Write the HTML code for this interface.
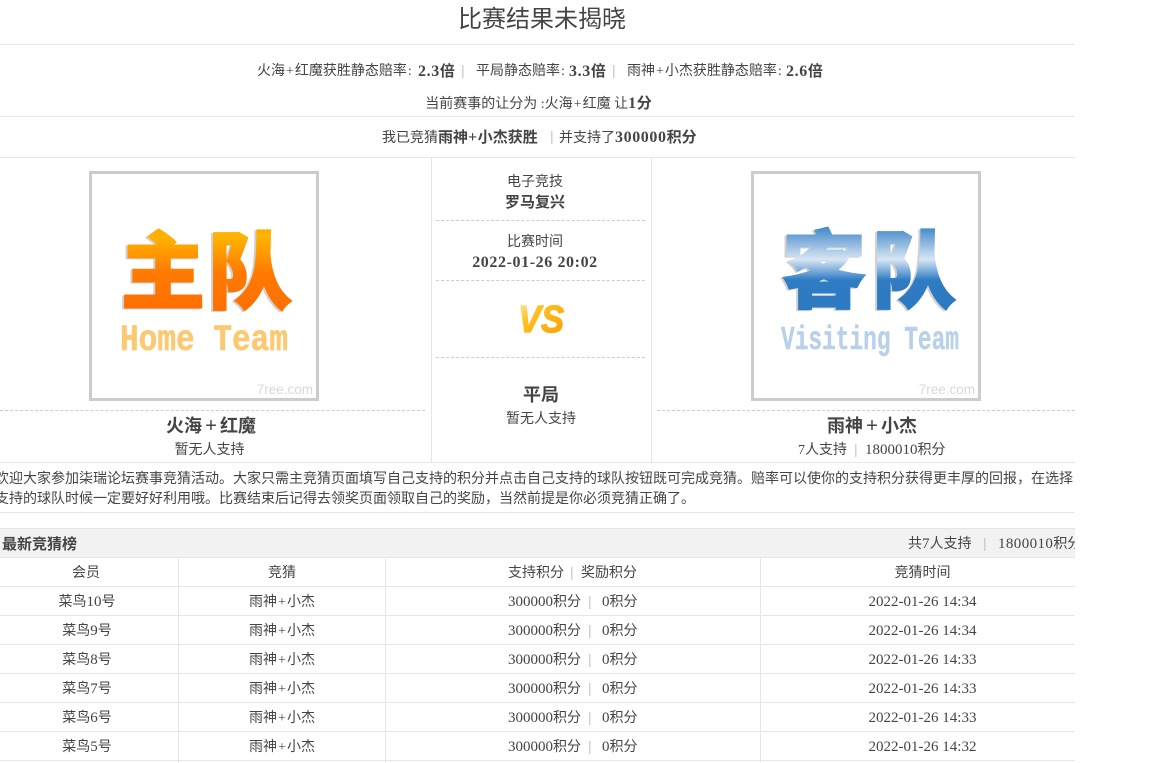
<!DOCTYPE html>
<html lang="zh"><head><meta charset="utf-8"><title>比赛结果未揭晓</title>
<style>
html,body{margin:0;padding:0;background:#fff}
body{width:1152px;height:763px;overflow:hidden;position:relative;font:14px/20px "Liberation Serif","Noto Sans CJK SC",sans-serif;color:#444}
#w{position:absolute;left:0;top:0;width:1075px;height:763px;overflow:hidden}
.h{position:absolute;left:0;width:1075px;height:1px;background:#e6e6e6}
.v{position:absolute;width:1px;background:#e6e6e6}
.d{position:absolute;height:0;border-top:1px dashed #ccc}
.c{position:absolute;text-align:center;white-space:nowrap;height:20px;line-height:20px}
.l{position:absolute;white-space:nowrap;height:20px;line-height:20px}
b{font-weight:bold;color:#444;font-size:15px}
b em{font:bold 16px/0 "Liberation Serif",serif;letter-spacing:.6px}
i{font-style:normal;color:#c4c4c4;font-family:"Liberation Sans",sans-serif;line-height:0}
.n{font-size:15px;line-height:0}
.p{padding:0 1px;line-height:0}
.q{padding:0 3px;line-height:0;font-size:21px}
.box{position:absolute;top:171px;width:224px;height:224px;border:3px solid #ccc;background:#fff}
.box svg{position:absolute;left:-3px;top:-3px}
.big{font-size:18px;font-weight:bold}
</style></head><body><div id="w">
<div class="c" style="left:0;width:1084px;top:5px;height:30px;line-height:30px;font-size:24px">比赛结果未揭晓</div>
<div class="h" style="top:44px"></div>
<div class="l" style="left:257px;top:62px">火海<span class="p">+</span>红魔获胜静态赔率<span class="p">:</span></div>
<div class="l" style="left:418px;top:62px"><b><em>2.3</em>倍</b></div>
<div class="l" style="left:461px;top:62px"><i>|</i></div>
<div class="l" style="left:476px;top:62px">平局静态赔率<span class="p">:</span></div>
<div class="l" style="left:569px;top:62px"><b><em>3.3</em>倍</b></div>
<div class="l" style="left:612px;top:62px"><i>|</i></div>
<div class="l" style="left:627px;top:62px">雨神<span class="p">+</span>小杰获胜静态赔率<span class="p">:</span></div>
<div class="l" style="left:786px;top:62px"><b><em>2.6</em>倍</b></div>
<div class="c" style="left:0;width:1077px;top:94px">当前赛事的让分为 :火海<span class="p">+</span>红魔 让<b><em>1</em>分</b></div>
<div class="h" style="top:116px"></div>
<div class="l" style="left:382px;top:128px">我已竞猜<b>雨神<em>+</em>小杰获胜</b></div>
<div class="l" style="left:550px;top:128px"><i>|</i></div>
<div class="l" style="left:559px;top:128px">并支持了<b><em>300000</em>积分</b></div>
<div class="h" style="top:157px"></div>
<div class="v" style="left:431px;top:157px;height:305px"></div>
<div class="v" style="left:651px;top:157px;height:305px"></div>

<div class="box" style="left:89px">
<svg width="230" height="230" viewBox="0 0 230 230">
<defs><linearGradient id="o" x1="0" y1="0" x2="0" y2="1"><stop offset="0" stop-color="#ff8a00"/><stop offset=".25" stop-color="#ffb400"/><stop offset=".55" stop-color="#ff7a00"/><stop offset="1" stop-color="#ff6a00"/></linearGradient></defs>
<g font-family="'Noto Sans CJK SC',sans-serif" font-weight="900" font-size="84">
<text x="30" y="132" fill="#d0d0d0" stroke="#d0d0d0" stroke-width="2">主</text>
<text x="117" y="132" fill="#d0d0d0" stroke="#d0d0d0" stroke-width="2">队</text>
<text x="32" y="131" fill="url(#o)" stroke="url(#o)" stroke-width="2">主</text>
<text x="119" y="131" fill="url(#o)" stroke="url(#o)" stroke-width="2">队</text></g>
<text x="31" y="179" font-family="'Liberation Mono',monospace" font-weight="bold" font-size="37" fill="#fcc870" stroke="#fcc870" stroke-width=".5" textLength="168" lengthAdjust="spacingAndGlyphs">Home Team</text>
<text x="224" y="223" text-anchor="end" font-family="'Liberation Sans',sans-serif" font-size="13.5" fill="#d8d8d8">7ree.com</text>
</svg></div>

<div class="box" style="left:751px">
<svg width="230" height="230" viewBox="0 0 230 230">
<defs><linearGradient id="b" x1="0" y1="0" x2="0" y2="1"><stop offset="0" stop-color="#4a90d0"/><stop offset=".15" stop-color="#2f7cc4"/><stop offset=".45" stop-color="#d8e6f4"/><stop offset=".62" stop-color="#2f7cc4"/><stop offset="1" stop-color="#2a78c0"/></linearGradient></defs>
<g font-family="'Noto Sans CJK SC',sans-serif" font-weight="900" font-size="84">
<text x="29" y="131" fill="#d0d0d0" stroke="#d0d0d0" stroke-width="2">客</text>
<text x="119" y="131" fill="#d0d0d0" stroke="#d0d0d0" stroke-width="2">队</text>
<text x="31" y="130" fill="url(#b)" stroke="url(#b)" stroke-width="2">客</text>
<text x="121" y="130" fill="url(#b)" stroke="url(#b)" stroke-width="2">队</text></g>
<text x="30" y="178" font-family="'Liberation Mono',monospace" font-weight="bold" font-size="33" fill="#b8d0e8" stroke="#b8d0e8" stroke-width=".4" textLength="178" lengthAdjust="spacingAndGlyphs">Visiting Team</text>
<text x="224" y="223" text-anchor="end" font-family="'Liberation Sans',sans-serif" font-size="13.5" fill="#d8d8d8">7ree.com</text>
</svg></div>

<div class="c" style="left:434px;width:202px;top:173px">电子竞技</div>
<div class="c" style="left:434px;width:202px;top:193px"><b>罗马复兴</b></div>
<div class="d" style="left:436px;width:209px;top:220px"></div>
<div class="c" style="left:434px;width:202px;top:233px">比赛时间</div>
<div class="c" style="left:434px;width:202px;top:253px"><b><em>2022-01-26 20:02</em></b></div>
<div class="d" style="left:436px;width:209px;top:280px"></div>
<svg style="position:absolute;left:510px;top:298px" width="64" height="42" viewBox="0 0 64 42">
<defs><linearGradient id="v" x1="0" y1="0" x2="1" y2="1"><stop offset="0" stop-color="#fff0b8"/><stop offset=".35" stop-color="#ffc020"/><stop offset="1" stop-color="#ff9a00"/></linearGradient></defs>
<text x="8" y="34" font-family="'Liberation Sans',sans-serif" font-weight="bold" font-style="italic" font-size="38" fill="url(#v)" stroke="url(#v)" stroke-width="1.2" textLength="46" lengthAdjust="spacingAndGlyphs">VS</text>
</svg>
<div class="d" style="left:436px;width:209px;top:357px"></div>
<div class="c big" style="left:434px;width:214px;top:385px">平局</div>
<div class="c" style="left:434px;width:214px;top:410px">暂无人支持</div>

<div class="d" style="left:0;width:425px;top:410px"></div>
<div class="d" style="left:657px;width:418px;top:410px"></div>
<div class="c big" style="left:0;width:422px;top:416px">火海<span class="q">+</span>红魔</div>
<div class="c" style="left:0;width:419px;top:441px">暂无人支持</div>
<div class="c big" style="left:657px;width:430px;top:416px">雨神<span class="q">+</span>小杰</div>
<div class="l" style="left:798px;top:441px"><span class="n" style="font-size:14px">7</span>人支持</div>
<div class="l" style="left:854px;top:441px"><i>|</i></div>
<div class="l" style="left:865px;top:441px"><span class="n">1800010</span>积分</div>

<div class="h" style="top:462px"></div>
<div class="l" style="left:-5px;top:470px">欢迎大家参加柒瑞论坛赛事竞猜活动。大家只需主竞猜页面填写自己支持的积分并点击自己支持的球队按钮既可完成竞猜。赔率可以使你的支持积分获得更丰厚的回报，在选择</div>
<div class="l" style="left:-5px;top:490px">支持的球队时候一定要好好利用哦。比赛结束后记得去领奖页面领取自己的奖励，当然前提是你必须竞猜正确了。</div>
<div class="h" style="top:512px"></div>

<div class="h" style="top:528px;background:#f2f2f2;border-top:1px solid #e6e6e6;border-bottom:1px solid #e6e6e6;box-sizing:border-box;height:30px"></div>
<div class="l" style="left:2px;top:535px"><b>最新竞猜榜</b></div>
<div class="l" style="left:908px;top:535px">共<span class="n">7</span>人支持</div>
<div class="l" style="left:983px;top:535px"><i>|</i></div>
<div class="l" style="left:998px;top:535px"><span class="n" style="letter-spacing:.4px">1800010</span>积分</div>

<div class="v" style="left:178px;top:557px;height:206px"></div>
<div class="v" style="left:385px;top:557px;height:206px"></div>
<div class="v" style="left:760px;top:557px;height:206px"></div>
<div class="h" style="top:586px"></div>
<div class="h" style="top:615px"></div>
<div class="h" style="top:644px"></div>
<div class="h" style="top:673px"></div>
<div class="h" style="top:702px"></div>
<div class="h" style="top:731px"></div>
<div class="h" style="top:760px"></div>

<div class="c" style="left:0;width:172px;top:564px">会员</div>
<div class="c" style="left:179px;width:206px;top:564px">竞猜</div>
<div class="l" style="left:508px;top:564px">支持积分</div>
<div class="l" style="left:570px;top:564px"><i>|</i></div>
<div class="l" style="left:581px;top:564px">奖励积分</div>
<div class="c" style="left:761px;width:323px;top:564px">竞猜时间</div>

<div class="c" style="left:0;width:174px;top:593px">菜鸟<span class="n">10</span>号</div>
<div class="c" style="left:179px;width:206px;top:593px">雨神<span class="p">+</span>小杰</div>
<div class="l" style="left:508px;top:593px"><span class="n">300000</span>积分</div>
<div class="l" style="left:588px;top:593px"><i>|</i></div>
<div class="l" style="left:602px;top:593px"><span class="n">0</span>积分</div>
<div class="c" style="left:761px;width:323px;top:593px"><span class="n">2022-01-26 14:34</span></div>

<div class="c" style="left:0;width:174px;top:622px">菜鸟<span class="n">9</span>号</div>
<div class="c" style="left:179px;width:206px;top:622px">雨神<span class="p">+</span>小杰</div>
<div class="l" style="left:508px;top:622px"><span class="n">300000</span>积分</div>
<div class="l" style="left:588px;top:622px"><i>|</i></div>
<div class="l" style="left:602px;top:622px"><span class="n">0</span>积分</div>
<div class="c" style="left:761px;width:323px;top:622px"><span class="n">2022-01-26 14:34</span></div>

<div class="c" style="left:0;width:174px;top:651px">菜鸟<span class="n">8</span>号</div>
<div class="c" style="left:179px;width:206px;top:651px">雨神<span class="p">+</span>小杰</div>
<div class="l" style="left:508px;top:651px"><span class="n">300000</span>积分</div>
<div class="l" style="left:588px;top:651px"><i>|</i></div>
<div class="l" style="left:602px;top:651px"><span class="n">0</span>积分</div>
<div class="c" style="left:761px;width:323px;top:651px"><span class="n">2022-01-26 14:33</span></div>

<div class="c" style="left:0;width:174px;top:680px">菜鸟<span class="n">7</span>号</div>
<div class="c" style="left:179px;width:206px;top:680px">雨神<span class="p">+</span>小杰</div>
<div class="l" style="left:508px;top:680px"><span class="n">300000</span>积分</div>
<div class="l" style="left:588px;top:680px"><i>|</i></div>
<div class="l" style="left:602px;top:680px"><span class="n">0</span>积分</div>
<div class="c" style="left:761px;width:323px;top:680px"><span class="n">2022-01-26 14:33</span></div>

<div class="c" style="left:0;width:174px;top:709px">菜鸟<span class="n">6</span>号</div>
<div class="c" style="left:179px;width:206px;top:709px">雨神<span class="p">+</span>小杰</div>
<div class="l" style="left:508px;top:709px"><span class="n">300000</span>积分</div>
<div class="l" style="left:588px;top:709px"><i>|</i></div>
<div class="l" style="left:602px;top:709px"><span class="n">0</span>积分</div>
<div class="c" style="left:761px;width:323px;top:709px"><span class="n">2022-01-26 14:33</span></div>

<div class="c" style="left:0;width:174px;top:738px">菜鸟<span class="n">5</span>号</div>
<div class="c" style="left:179px;width:206px;top:738px">雨神<span class="p">+</span>小杰</div>
<div class="l" style="left:508px;top:738px"><span class="n">300000</span>积分</div>
<div class="l" style="left:588px;top:738px"><i>|</i></div>
<div class="l" style="left:602px;top:738px"><span class="n">0</span>积分</div>
<div class="c" style="left:761px;width:323px;top:738px"><span class="n">2022-01-26 14:32</span></div>
</div></body></html>
